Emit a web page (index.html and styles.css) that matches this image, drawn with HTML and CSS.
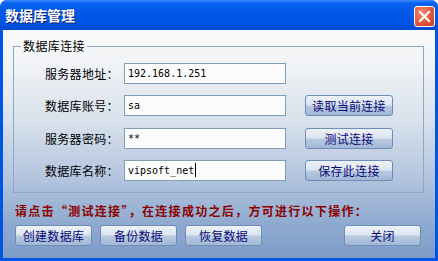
FILE: index.html
```html
<!DOCTYPE html>
<html lang="zh-CN">
<head>
  <meta charset="UTF-8">
  <title>数据库管理</title>
  <link rel="stylesheet" href="styles.css">
</head>
<body>
  <div class="window">
    <div class="titlebar">
      <span class="title">数据库管理</span>
      <span class="close-btn">
        <svg width="13" height="13" viewBox="0 0 13 13"><path d="M2 2 L11 11 M11 2 L2 11" stroke="#fff" stroke-width="2.2" stroke-linecap="square"/></svg>
      </span>
    </div>
    <div class="content">
      <fieldset class="group">
        <legend>数据库连接</legend>
        <div class="form-grid">
          <label>服务器地址：</label>
          <div class="field">192.168.1.251</div>
          <span></span>

          <label>数据库账号：</label>
          <div class="field">sa</div>
          <button class="btn">读取当前连接</button>

          <label>服务器密码：</label>
          <div class="field">**</div>
          <button class="btn">测试连接</button>

          <label>数据库名称：</label>
          <div class="field">vipsoft_net<span class="caret"></span></div>
          <button class="btn">保存此连接</button>
        </div>
      </fieldset>
      <p class="warn">请点击“测试连接”，在连接成功之后，方可进行以下操作：</p>
      <div class="actions">
        <button class="btn">创建数据库</button>
        <button class="btn">备份数据</button>
        <button class="btn">恢复数据</button>
        <button class="btn close">关闭</button>
      </div>
    </div>
  </div>
</body>
</html>
```

FILE: styles.css
```css
/* window frame */
body {
  margin: 0;
  background: #ffffff;
  font-family: "Noto Sans CJK SC", "DejaVu Sans", sans-serif;
  font-size: 12px;
  color: #000000;
}
.window {
  width: 438px;
  height: 261px;
  background: #0055e5;
  border-radius: 7px 7px 0 0;
  display: flex;
  flex-direction: column;
  box-sizing: border-box;
  overflow: hidden;
}
.titlebar {
  height: 30px;
  flex: none;
  display: flex;
  align-items: center;
  padding: 0 3px 0 5px;
  background: linear-gradient(#3d8dff 0, #0a62f0 3px, #0058e6 40%, #0054e3 80%, #0048d0 100%);
}
.title {
  color: #ffffff;
  font-weight: bold;
  font-size: 14px;
  letter-spacing: 0;
  text-shadow: 1px 1px 0 #0a1e78;
}
.close-btn {
  margin-left: auto;
  width: 21px;
  height: 21px;
  box-sizing: border-box;
  border: 1px solid #ffffff;
  border-radius: 3px;
  background: radial-gradient(circle at 35% 30%, #f08a6c 0, #e0573a 55%, #c5401f 100%);
  display: flex;
  align-items: center;
  justify-content: center;
  margin-top: 2px;
}
.content {
  flex: 1;
  margin: 0 3px 3px 3px;
  background: linear-gradient(#f9f9f9 0, #f1f3f6 15%, #d8e1ec 40%, #b3c5de 65%, #8faacf 85%, #7e9cc9 100%);
  display: flex;
  flex-direction: column;
}

/* connection group */
.group {
  margin: 9px 11px 0 10px;
  padding: 10px 0 11px 31px;
  border: 1px solid #8da7c8;
  border-radius: 0;
}
.group legend {
  margin-left: -24px;
  padding: 0 2px;
  line-height: 14px;
  font-size: 12px;
  letter-spacing: 0.4px;
}
.form-grid {
  display: grid;
  grid-template-columns: 73px 162px 101px;
  grid-auto-rows: 21px;
  column-gap: 6px;
  row-gap: 11.3px;
  align-items: center;
}
.form-grid label {
  text-align: right;
  white-space: nowrap;
  letter-spacing: 0.3px;
}
.field {
  height: 21px;
  box-sizing: border-box;
  border: 1px solid #7f9db9;
  background: #fcfcfc;
  padding: 0 3px;
  font-family: "DejaVu Sans Mono", monospace;
  font-size: 10px;
  line-height: 19px;
  color: #000000;
  display: flex;
  align-items: center;
}
.caret {
  width: 1px;
  height: 14px;
  background: #000000;
  margin-left: 1px;
}
.form-grid .btn {
  width: 88px;
  margin-left: 13px;
}

/* buttons */
.btn {
  height: 21px;
  box-sizing: border-box;
  border: 1px solid #6e8cb8;
  border-radius: 3px;
  background: linear-gradient(#eef2f8 0, #dce5f1 45%, #b8c9e0 55%, #a2b8d6 100%);
  color: #0a0a78;
  font-family: "Noto Sans CJK SC", sans-serif;
  font-size: 12px;
  padding: 0;
  white-space: nowrap;
  letter-spacing: 0.3px;
}
.warn {
  margin: 10px 0 0 12px;
  line-height: 16px;
  color: #8c0000;
  font-weight: bold;
  font-size: 12px;
  letter-spacing: 1.3px;
}
.actions {
  display: flex;
  gap: 8px;
  margin: 6px 0 0 12px;
}
.actions .btn {
  width: 77px;
}
.actions .close {
  margin-left: 74px;
}
```
